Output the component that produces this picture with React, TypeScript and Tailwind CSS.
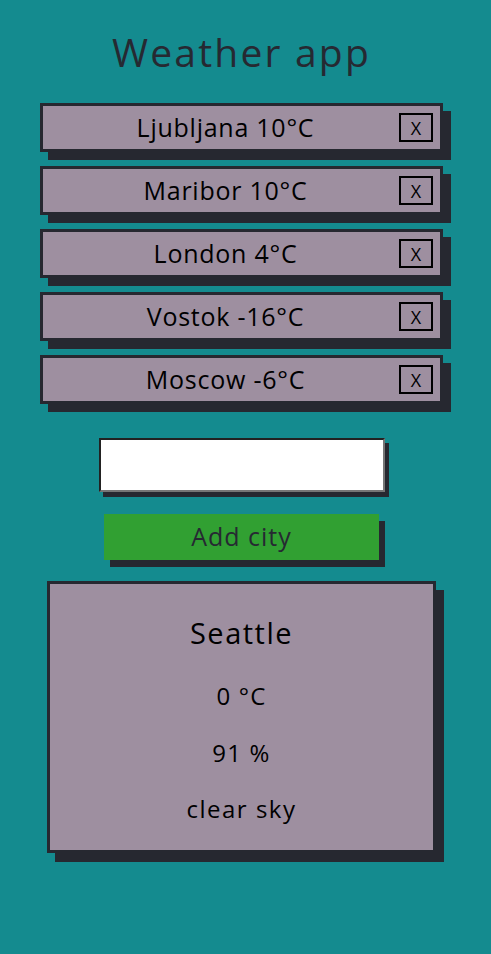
import React from "react";

const cities = [
  "Ljubljana 10°C",
  "Maribor 10°C",
  "London 4°C",
  "Vostok -16°C",
  "Moscow -6°C",
];

export default function App() {
  return (
    <div
      className="min-h-[954px] w-full bg-[#148b8f] flex flex-col items-center pr-[8px]"
      style={{ fontFamily: "'Open Sans', 'Noto Sans', sans-serif" }}
    >
      <h1 className="mt-[26px] text-[39px] leading-[52px] tracking-[2.2px] text-[#262932]">
        Weather app
      </h1>
      <div className="mt-[25px] flex flex-col gap-[14px] w-[403px]">
        {cities.map((c) => (
          <div
            key={c}
            className="h-[49px] border-[3px] border-[#262830] bg-[#9e8fa0] shadow-[8px_8px_0_#262830] flex items-center"
          >
            <span className="flex-1 text-center pl-[9px] text-[25px] tracking-[0.75px] text-black">{c}</span>
            <button className="w-[34px] h-[29px] border-2 border-black text-[18px] font-medium leading-none text-black mr-[7px] flex items-center justify-center">
              X
            </button>
          </div>
        ))}
      </div>
      <input
        className="mt-[34px] w-[286px] h-[54px] bg-white border-2 border-t-[#222] border-l-[#222] border-r-[#767676] border-b-[#767676] shadow-[4px_5px_0_#262830] outline-none"
        type="text"
      />
      <button className="mt-[22px] w-[275px] h-[46px] bg-[#31a032] text-[#262932] text-[25px] tracking-[1px] shadow-[6px_7px_0_#262830]">
        Add city
      </button>
      <div className="mt-[21px] w-[389px] h-[272px] border-[3px] border-[#262830] bg-[#9e8fa0] shadow-[8px_9px_0_#262830] flex flex-col items-center text-black pt-[31px]">
        <div className="text-[29px] leading-[36px] tracking-[1.5px]">Seattle</div>
        <div className="mt-[30px] text-[24px] leading-[30px] tracking-[1.2px]">0 °C</div>
        <div className="mt-[27px] text-[24px] leading-[30px] tracking-[1.2px]">91 %</div>
        <div className="mt-[26px] text-[24px] leading-[30px] tracking-[1.5px]">clear sky</div>
      </div>
    </div>
  );
}
